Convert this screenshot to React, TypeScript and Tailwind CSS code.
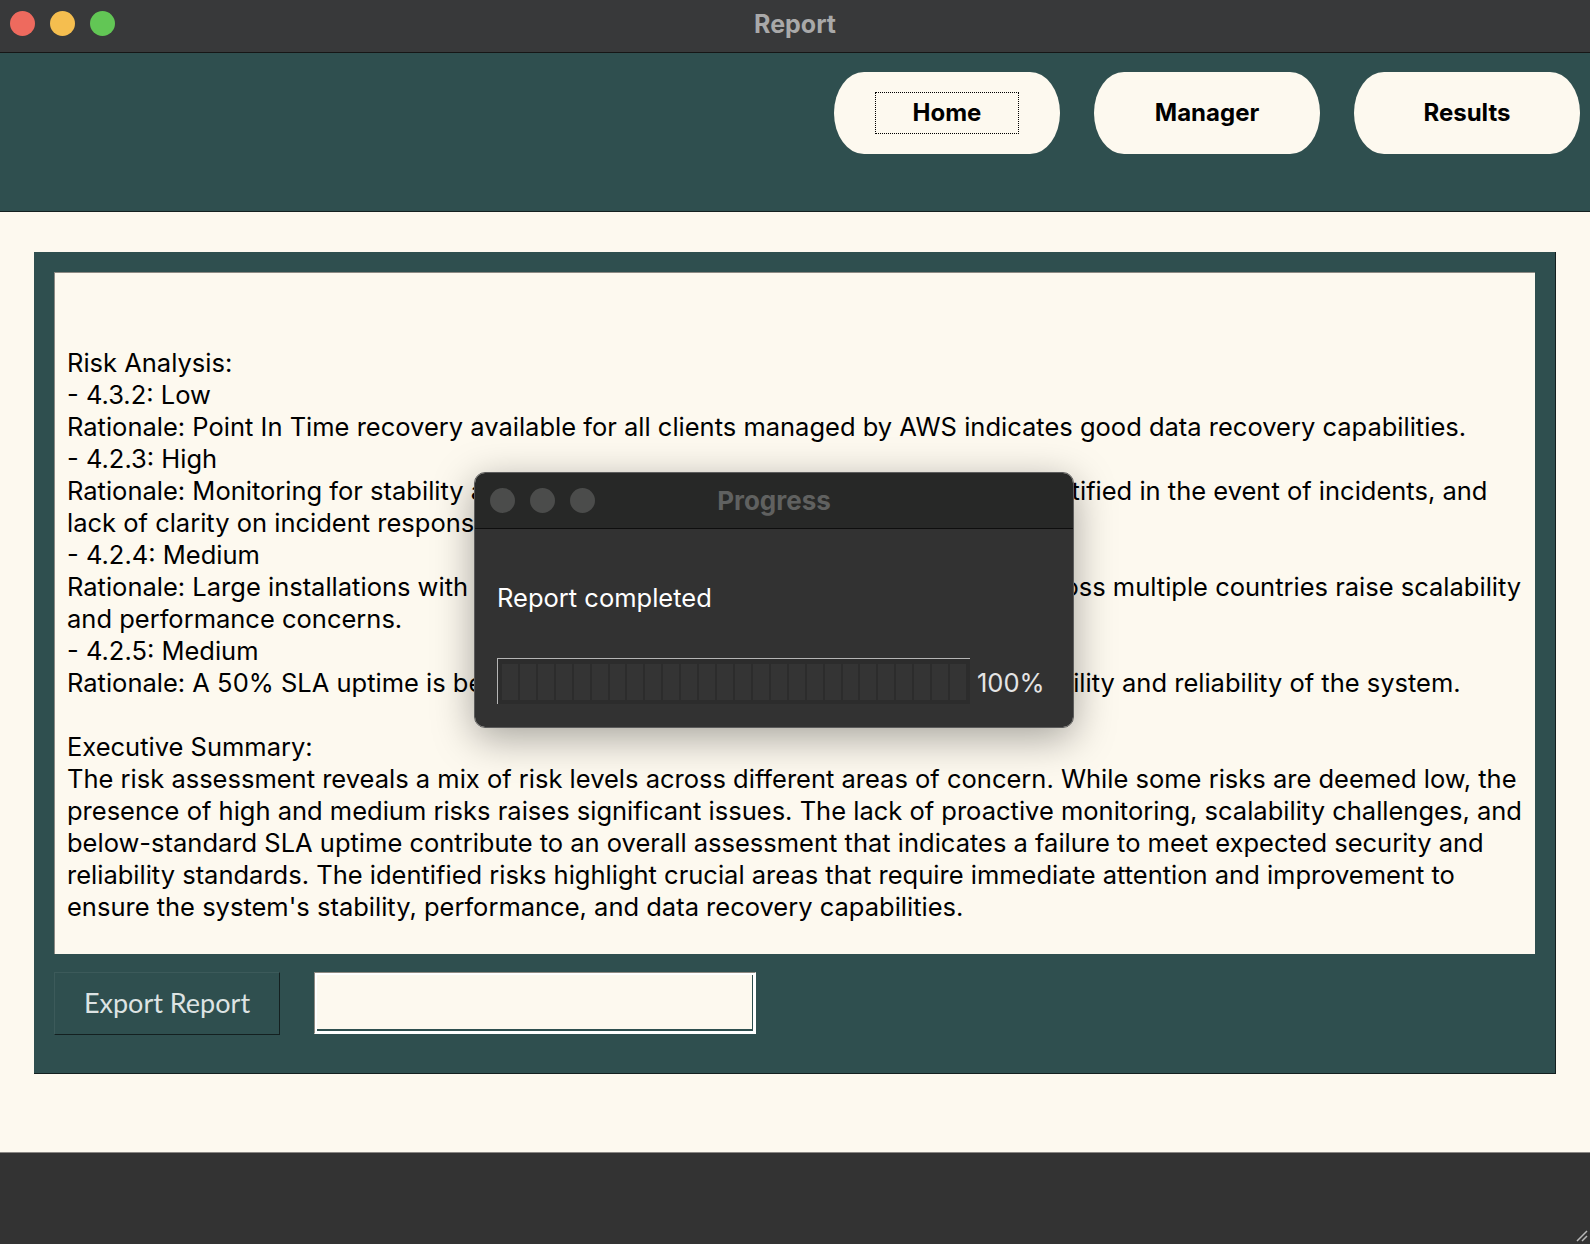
import React from 'react';

const reportLines = [
  '',
  '',
  'Risk Analysis:',
  '- 4.3.2: Low',
  'Rationale: Point In Time recovery available for all clients managed by AWS indicates good data recovery capabilities.',
  '- 4.2.3: High',
  'Rationale: Monitoring for stability and performance is reactive, with clients being notified in the event of incidents, and',
  'lack of clarity on incident response processes.',
  '- 4.2.4: Medium',
  'Rationale: Large installations with hundreds of databases and instances spread across multiple countries raise scalability',
  'and performance concerns.',
  '- 4.2.5: Medium',
  'Rationale: A 50% SLA uptime is below industry standard, thus impacting the availability and reliability of the system.',
  '',
  'Executive Summary:',
  'The risk assessment reveals a mix of risk levels across different areas of concern. While some risks are deemed low, the',
  'presence of high and medium risks raises significant issues. The lack of proactive monitoring, scalability challenges, and',
  'below-standard SLA uptime contribute to an overall assessment that indicates a failure to meet expected security and',
  'reliability standards. The identified risks highlight crucial areas that require immediate attention and improvement to',
  "ensure the system's stability, performance, and data recovery capabilities.",
];

const NavButton: React.FC<{ label: string; focused?: boolean }> = ({ label, focused }) => (
  <button className="w-[226px] h-[82px] rounded-[30px/41px] bg-[#fdf9ef] flex items-center justify-center">
    <span
      className={
        focused
          ? 'px-[37px] h-[42px] flex items-center border border-dotted border-black'
          : 'px-[37px] h-[42px] flex items-center'
      }
    >
      <span className="text-[24px] font-bold text-black [font-family:Inter,sans-serif]">{label}</span>
    </span>
  </button>
);

const ProgressDialog: React.FC = () => (
  <div className="absolute left-[474px] top-[472px] w-[600px] h-[256px] rounded-[11px] overflow-hidden border border-[#5c5c5c] shadow-[0_10px_40px_rgba(0,0,0,0.35)] flex flex-col [font-family:Inter,sans-serif]">
    <div className="h-[56px] bg-[#272827] border-b border-[#0e0e0e] grid grid-cols-[1fr_auto_1fr] items-center">
      <div className="flex gap-[15px] pl-[15px]">
        <span className="w-[25px] h-[25px] rounded-full bg-[#4b4c4b]" />
        <span className="w-[25px] h-[25px] rounded-full bg-[#4b4c4b]" />
        <span className="w-[25px] h-[25px] rounded-full bg-[#4b4c4b]" />
      </div>
      <span className="text-[26px] font-bold text-[#606160]">Progress</span>
      <div />
    </div>
    <div className="flex-1 bg-[#323232] pl-[22px] pt-[53px]">
      <div className="text-[25.5px] leading-[32px] text-white">Report completed</div>
      <div className="mt-[44px] flex items-end gap-[7px]">
        <div className="w-[473px] h-[46px] border-t border-l border-[#b5b5b5] bg-[#2c2c2c] flex gap-[2px] px-[4px] pt-[5px] pb-[4px]">
          {Array.from({ length: 26 }).map((_, i) => (
            <div key={i} className="flex-1 bg-[#343434]" />
          ))}
        </div>
        <span className="text-[25.5px] leading-[32px] text-[#e4e4e4] pb-[5px]">100%</span>
      </div>
    </div>
  </div>
);

export default function App() {
  return (
    <div className="relative w-[1590px] h-[1244px] overflow-hidden flex flex-col bg-[#fdf9ef] [font-family:Inter,sans-serif]">
      {/* window title bar */}
      <div className="h-[53px] shrink-0 bg-[#38393a] border-b border-[#161616] grid grid-cols-[1fr_auto_1fr] items-start pt-[9px]">
        <div className="flex gap-[15px] pl-[10px] pt-[2px]">
          <span className="w-[25px] h-[25px] rounded-full bg-[#ee6a5e]" />
          <span className="w-[25px] h-[25px] rounded-full bg-[#f5be4f]" />
          <span className="w-[25px] h-[25px] rounded-full bg-[#62c655]" />
        </div>
        <span className="text-[25px] leading-[30px] font-bold text-[#a9a9a9]">Report</span>
        <div />
      </div>

      {/* nav header */}
      <div className="h-[159px] shrink-0 bg-[#2f4f4f] border-b border-[#142020] flex justify-end items-start gap-[34px] pt-[19px] pr-[10px]">
        <NavButton label="Home" focused />
        <NavButton label="Manager" />
        <NavButton label="Results" />
      </div>

      {/* content */}
      <div className="flex-1 pt-[40px] pl-[34px]">
        <div className="w-[1522px] h-[822px] bg-[#2f4f4f] border-r border-b border-[#142020] px-[20px] pt-[20px] flex flex-col">
          <div className="h-[682px] bg-[#fdf9ef] border-t border-l border-[#8c8a84] pl-[12px] pt-[10px] text-[25.5px] leading-[32px] text-black overflow-hidden">
            {reportLines.map((line, i) => (
              <div key={i} className="h-[32px] whitespace-pre">
                {line}
              </div>
            ))}
          </div>
          <div className="mt-[18px] flex gap-[34px]">
            <button className="w-[226px] h-[63px] bg-[#2f4f4f] border border-[#3c5a5a] border-b-[#142020] border-r-[#142020] text-[27px] text-[#dde3e3] [font-family:Lato,sans-serif]">
              Export Report
            </button>
            <div className="w-[442px] h-[62px] border border-[#8f8a82] border-b-white border-r-white p-[2px] bg-white">
              <div className="h-full bg-[#fdf9ef] border-b-2 border-r border-[#2f4f4f]" />
            </div>
          </div>
        </div>
      </div>

      {/* bottom strip */}
      <div className="h-[92px] shrink-0 bg-[#333333] border-t border-[#8a8784] flex justify-end items-end">
        <svg width="14" height="14" viewBox="0 0 14 14" className="mb-[2px] mr-[2px]">
          <path d="M13 3 L3 13 M13 8 L8 13" stroke="#b8b8b8" strokeWidth="1.5" />
        </svg>
      </div>

      <ProgressDialog />
    </div>
  );
}
